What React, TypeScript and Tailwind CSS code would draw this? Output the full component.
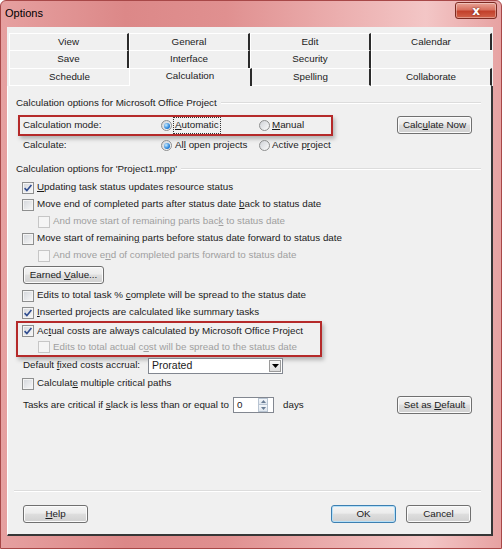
import React from "react";

function Check({ checked = false, disabled = false }: { checked?: boolean; disabled?: boolean }) {
  return (
    <span
      className={`flex items-center justify-center w-[12px] h-[12px] shrink-0 border ${
        disabled
          ? "border-[#c6c6c6] bg-[#f5f5f5]"
          : "border-[#8e8f8f] bg-[linear-gradient(135deg,#d3d6db,#f8f8f8)] shadow-[inset_0_0_0_1px_#f4f4f4]"
      }`}
    >
      {checked && (
        <svg width="10" height="10" viewBox="0 0 10 10">
          <path d="M1.6 5.1 L3.9 7.6 L8.4 2" fill="none" stroke="#2f4c8f" strokeWidth="1.6" />
        </svg>
      )}
    </span>
  );
}

function Radio({ on = false }: { on?: boolean }) {
  return (
    <span className="flex items-center justify-center w-[11px] h-[11px] shrink-0 rounded-full border border-[#8e8f8f] bg-[linear-gradient(135deg,#d0d3d8,#fafafa)]">
      {on && (
        <span className="w-[6px] h-[6px] rounded-full bg-[radial-gradient(circle_at_35%_35%,#c9ecff,#2b85da_60%,#15509f)]" />
      )}
    </span>
  );
}

function Btn({ children, className = "", def = false }: { children: React.ReactNode; className?: string; def?: boolean }) {
  return (
    <div
      className={`flex items-center justify-center h-[18px] shrink-0 rounded-[3px] border bg-[linear-gradient(#f4f4f4,#ececec_45%,#dedede_50%,#d0d0d0)] whitespace-pre ${
        def ? "border-[#3c7fb1] shadow-[inset_0_0_0_1px_#b6e0f8]" : "border-[#707070] shadow-[inset_0_0_0_1px_#fbfbfb]"
      } ${className}`}
    >
      {children}
    </div>
  );
}

function Header({ children }: { children: React.ReactNode }) {
  return (
    <div className="flex items-center h-[16px] pl-[8px] pr-[10px]">
      <span>{children}</span>
      <div className="flex-1 ml-[4px] h-[2px] border-t border-t-[#dcdcdc] border-b border-b-white" />
    </div>
  );
}

function CheckRow({
  checked = false,
  disabled = false,
  pad = "pl-[14px]",
  children,
}: {
  checked?: boolean;
  disabled?: boolean;
  pad?: string;
  children: React.ReactNode;
}) {
  return (
    <div className={`flex items-center h-[17px] ${pad}`}>
      <Check checked={checked} disabled={disabled} />
      <span className={`ml-[3px] whitespace-nowrap ${disabled ? "text-[#9f9f9f]" : ""}`}>{children}</span>
    </div>
  );
}

export default function App() {
  return (
    <div className="w-[502px] h-[549px] flex flex-col overflow-hidden border border-[#a84848] rounded-t-[6px] bg-[linear-gradient(90deg,#e6a0a0,#dc8888_25%,#e09090_45%,#eaabab_65%,#f3c6c6_85%,#e7a2a2)] text-[9.8px] text-[#1b1b1b] font-['Liberation_Sans',Arial,sans-serif]">
      {/* title bar */}
      <div className="flex items-start justify-between h-[26px] shrink-0">
        <span className="pl-[4px] pt-[4px] text-[11px] text-black">Options</span>
        <div className="mt-[1px] mr-[4px] w-[42px] h-[17px] flex items-center justify-center rounded-[3px] border border-[#7d2b22] bg-[linear-gradient(#e8a396,#d7705f_45%,#c2402b_55%,#d2624a)] shadow-[inset_0_0_0_1px_rgba(255,255,255,0.35)]">
          <span className="text-white font-bold text-[12px] leading-none [text-shadow:0_0_2px_#5a1a10] font-['DejaVu_Sans',sans-serif]">x</span>
        </div>
      </div>

      {/* client */}
      <div className="ml-[6px] w-[486px] h-[509px] shrink-0 flex flex-col bg-[#f0f0f0]">
        {/* tabs */}
        <div className="pt-[6px] pl-[2px] flex flex-col">
          <div className="flex h-[17px]">
            <div className="w-[120px] flex items-center justify-center border-t border-l border-white border-r-2 border-r-[#2b2b2b]">View</div>
            <div className="w-[121px] flex items-center justify-center border-t border-l border-white border-r-2 border-r-[#2b2b2b]">General</div>
            <div className="w-[121px] flex items-center justify-center border-t border-l border-white border-r-2 border-r-[#2b2b2b]">Edit</div>
            <div className="w-[121px] flex items-center justify-center border-t border-l border-white border-r-2 border-r-[#2b2b2b]">Calendar</div>
          </div>
          <div className="flex h-[18px]">
            <div className="w-[120px] flex items-center justify-center border-t border-l border-white border-r-2 border-r-[#2b2b2b]">Save</div>
            <div className="w-[121px] flex items-center justify-center border-t border-l border-white border-r-2 border-r-[#2b2b2b]">Interface</div>
            <div className="w-[121px] flex items-center justify-center border-t border-l border-white border-r-2 border-r-[#2b2b2b]">Security</div>
            <div className="w-[121px] border-t border-l border-white" />
          </div>
          <div className="flex h-[18px]">
            <div className="w-[120px] flex items-center justify-center border-t border-l border-b border-white">Schedule</div>
            <div className="w-[123px] flex items-center justify-center pb-[2px] border-t border-l border-white border-r-2 border-r-[#2b2b2b]">Calculation</div>
            <div className="w-[119px] flex items-center justify-center border-t border-b border-white border-r-2 border-r-[#2b2b2b]">Spelling</div>
            <div className="w-[121px] flex items-center justify-center border-t border-l border-b border-white border-r-2 border-r-[#2b2b2b]">Collaborate</div>
          </div>
        </div>

        {/* panel */}
        <div className="h-[402px] shrink-0 flex flex-col border-l border-l-white border-r-2 border-r-[#363636]">
          <div className="mt-[9px]">
            <Header>Calculation options for Microsoft Office Project</Header>
          </div>

          <div className="mt-[4px] flex items-start">
            <div className="ml-[10px] w-[315px] h-[21px] flex items-center pl-[3px] border-2 border-[#b52a2a] shadow-[2px_3px_4px_rgba(0,0,0,0.25)]">
              <span className="w-[138px]">Calculation mode:</span>
              <div className="w-[98px] flex items-center">
                <Radio on />
                <span className="ml-[2px] px-[1px] outline-1 outline-dotted outline-[#333]">
                  <u>A</u>utomatic
                </span>
              </div>
              <div className="flex items-center">
                <Radio />
                <span className="ml-[2px]">
                  <u>M</u>anual
                </span>
              </div>
            </div>
            <Btn className="ml-[64px] w-[75px] mt-[1px]">
              Calc<u>u</u>late Now
            </Btn>
          </div>

          <div className="mt-[1px] h-[17px] flex items-center pl-[15px]">
            <span className="w-[138px]">Calculate:</span>
            <div className="w-[98px] flex items-center">
              <Radio on />
              <span className="ml-[3px]">
                Al<u>l</u> open projects
              </span>
            </div>
            <div className="flex items-center">
              <Radio />
              <span className="ml-[2px]">
                Active p<u>r</u>oject
              </span>
            </div>
          </div>

          <div className="mt-[7px]">
            <Header>Calculation options for 'Project1.mpp'</Header>
          </div>

          <div className="mt-[2px] flex flex-col">
            <CheckRow checked>
              <u>U</u>pdating task status updates resource status
            </CheckRow>
            <CheckRow>
              Move end of completed parts after status date <u>b</u>ack to status date
            </CheckRow>
            <CheckRow disabled pad="pl-[30px]">
              And move start of remaining parts bac<u>k</u> to status date
            </CheckRow>
            <CheckRow>
              Move start of remainin<u>g</u> parts before status date forward to status date
            </CheckRow>
            <CheckRow disabled pad="pl-[30px]">
              And move e<u>n</u>d of completed parts forward to status date
            </CheckRow>
          </div>

          <Btn className="mt-[2px] ml-[15px] w-[81px]">
            Earned{" "}<u>V</u>alue...
          </Btn>

          <div className="mt-[3px] flex flex-col">
            <CheckRow>
              Edits to total task % <u>c</u>omplete will be spread to the status date
            </CheckRow>
            <CheckRow checked>
              <u>I</u>nserted projects are calculated like summary tasks
            </CheckRow>
          </div>

          <div className="ml-[8px] w-[306px] h-[36px] flex flex-col justify-center border-2 border-[#b52a2a] shadow-[2px_3px_4px_rgba(0,0,0,0.25)]">
            <CheckRow checked pad="pl-[4px]">
              Ac<u>t</u>ual costs are always calculated by Microsoft Office Project
            </CheckRow>
            <CheckRow disabled pad="pl-[20px]">
              Edits to total actual c<u>o</u>st will be spread to the status date
            </CheckRow>
          </div>

          <div className="h-[17px] flex items-center pl-[15px]">
            <span className="w-[125px]">
              Default <u>f</u>ixed costs accrual:
            </span>
            <div className="w-[135px] h-[16px] flex items-center border border-[#828790] bg-white">
              <span className="pl-[3px] text-[10.5px]">Prorated</span>
              <span className="ml-auto mr-[1px] w-[12px] h-[12px] flex items-center justify-center border border-[#9a9a9a] bg-[linear-gradient(#f6f6f6,#dcdcdc)]">
                <svg width="7" height="4" viewBox="0 0 7 4">
                  <path d="M0 0 H7 L3.5 4 Z" fill="#000" />
                </svg>
              </span>
            </div>
          </div>

          <div className="mt-[1px]">
            <CheckRow>
              Calculat<u>e</u> multiple critical paths
            </CheckRow>
          </div>

          <div className="mt-[4px] h-[18px] flex items-center pl-[15px] pr-[19px]">
            <span className="w-[210px]">
              Tasks are critical if <u>s</u>lack is less than or equal to
            </span>
            <div className="w-[41px] h-[16px] flex items-center border border-[#828790] bg-white">
              <span className="pl-[3px]">0</span>
              <div className="ml-auto mr-[5px] w-[10px] h-[14px] flex flex-col">
                <span className="h-[7px] flex items-center justify-center border border-[#b8c4d2] bg-[linear-gradient(#f4f7fa,#dfe6ee)]">
                  <svg width="5" height="3" viewBox="0 0 5 3">
                    <path d="M0 3 H5 L2.5 0 Z" fill="#6a7d95" />
                  </svg>
                </span>
                <span className="h-[7px] flex items-center justify-center border border-t-0 border-[#b8c4d2] bg-[linear-gradient(#f4f7fa,#dfe6ee)]">
                  <svg width="5" height="3" viewBox="0 0 5 3">
                    <path d="M0 0 H5 L2.5 3 Z" fill="#6a7d95" />
                  </svg>
                </span>
              </div>
            </div>
            <span className="ml-[9px]">days</span>
            <Btn className="ml-auto w-[75px]">
              Set as{" "}<u>D</u>efault
            </Btn>
          </div>
        </div>

        {/* footer */}
        <div className="h-[48px] shrink-0 flex flex-col border-l border-l-white border-r-2 border-r-[#363636] border-b-2 border-b-[#363636]">
          <div className="mt-[2px] ml-[6px] w-[467px] h-[2px] border-t border-t-[#dcdcdc] border-b border-b-white" />
          <div className="mt-[13px] flex items-center">
            <Btn className="ml-[15px] w-[65px]">
              <u>H</u>elp
            </Btn>
            <Btn def className="ml-[243px] w-[65px]">
              OK
            </Btn>
            <Btn className="ml-[10px] w-[65px]">Cancel</Btn>
          </div>
        </div>
      </div>
    </div>
  );
}
